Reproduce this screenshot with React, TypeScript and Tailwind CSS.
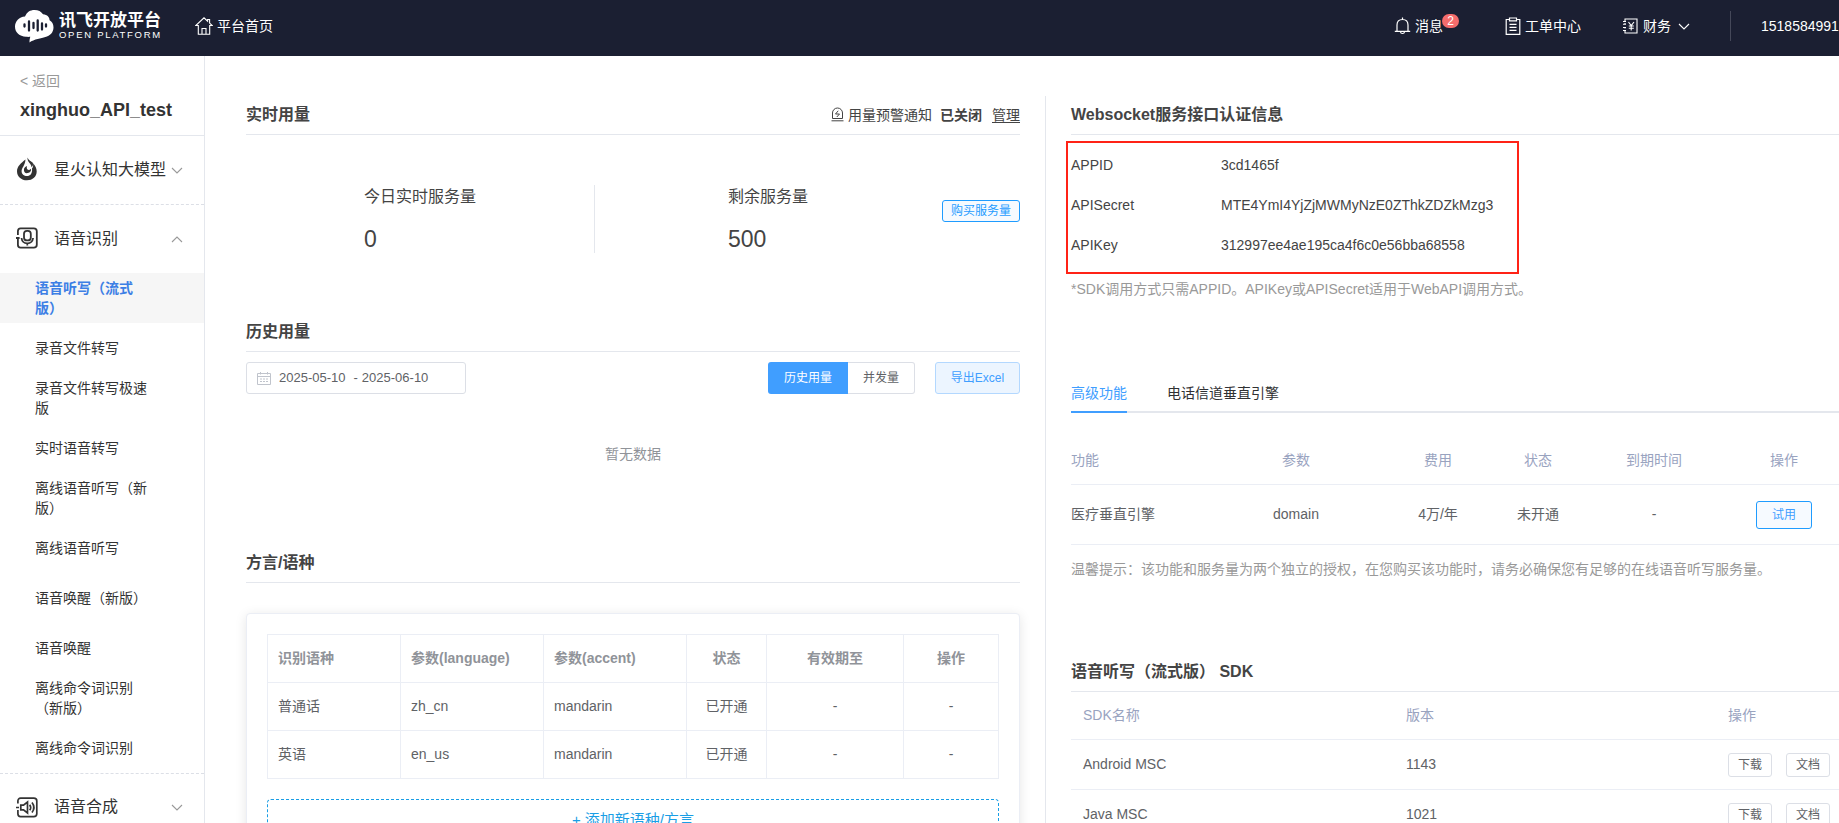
import type { ReactNode } from "react";
import { clsx } from "clsx";

const LANGUAGES = [
  { name: "普通话", language: "zh_cn", accent: "mandarin" },
  { name: "英语", language: "en_us", accent: "mandarin" },
];

const CREDENTIALS = [
  { label: "APPID", value: "3cd1465f" },
  { label: "APISecret", value: "MTE4YmI4YjZjMWMyNzE0ZThkZDZkMzg3" },
  { label: "APIKey", value: "312997ee4ae195ca4f6c0e56bba68558" },
];

const SDKS = [
  { name: "Android MSC", version: "1143" },
  { name: "Java MSC", version: "1021" },
];

const SPEECH_ITEMS = [
  { label: "录音文件转写", gap: "mt-[15px]" },
  { label: "录音文件转写极速版", gap: "mt-5" },
  { label: "实时语音转写", gap: "mt-5" },
  { label: "离线语音听写（新版）", gap: "mt-5" },
  { label: "离线语音听写", gap: "mt-5" },
  { label: "语音唤醒（新版）", gap: "mt-[30px]" },
  { label: "语音唤醒", gap: "mt-[30px]" },
  { label: "离线命令词识别（新版）", gap: "mt-5" },
  { label: "离线命令词识别", gap: "mt-5" },
];

function Chevron({ up, className }: { up?: boolean; className?: string }) {
  return (
    <svg width="12" height="7" viewBox="0 0 12 7" fill="none" className={className}>
      <path d={up ? "M1 6 6 1l5 5" : "M1 1l5 5 5-5"} stroke="currentColor" strokeWidth="1.1" />
    </svg>
  );
}

function Logo() {
  return (
    <div className="flex items-center gap-[5px] text-white">
      <svg width="39" height="33" viewBox="0 0 39 33">
        <path
          d="M10 6.5C12 2 15 0 19.500 0c4 0 6.600 1.500 8.500 4.300C32.500 4.500 34.500 7.500 34.600 10.200 37 11.500 38.500 14 38.500 17.200c0 5.300-3.500 8.700-8.200 9.800C26.500 28.500 19 29 14.500 32.500c0-2.500.3-4 .8-5.700-1.300.2-2.800.2-4.300 0C4.500 26.500 0 22.500 0 16.800 0 11.500 4 6.800 10 6.500Z"
          fill="#fff"
        />
        <path
          d="M9.500 14.500v2M14 11.500v9M18.500 13v5M22.700 10.500v10M27 13.500v6M31 14.500v2"
          stroke="#1b1f32"
          strokeWidth="2.3"
          strokeLinecap="round"
        />
      </svg>
      <div className="flex flex-col">
        <span className="h-[17px] text-[17px] font-bold leading-[17px] whitespace-nowrap">讯飞开放平台</span>
        <span className="mt-px text-[9.5px] leading-[10px] tracking-[1.72px] whitespace-nowrap">OPEN PLATFORM</span>
      </div>
    </div>
  );
}

function Header() {
  return (
    <header className="flex h-14 shrink-0 items-center bg-[#1b1f32] pl-[15px] text-sm text-white">
      <div className="-mt-1 w-[180px]">
        <Logo />
      </div>
      <div className="-mt-1 flex items-center">
        <svg width="18" height="18" viewBox="0 0 18 18" fill="none" stroke="#fff" strokeWidth="1.1">
          <path d="M3.300 8.500H.8L9 .8l3.600 3.400V2.500h2v3.600l2.600 2.400h-2.500v8.700H3.300Z" />
          <path d="M7 17v-5.500h4V17" />
        </svg>
        <span className="ml-1">平台首页</span>
      </div>
      <div className="-mt-1 ml-auto flex items-center">
        <svg width="17" height="18" viewBox="0 0 17 18" fill="none" stroke="#fff" strokeWidth="1.2">
          <path d="M3 14V8c0-3.500 2.200-5.500 5.500-5.500S14 4.500 14 8v6M.8 14.400h15.400M8.500 2.500V.5M6.500 15c.3 2 3.700 2 4 0" />
        </svg>
        <div className="relative ml-1">
          消息
          <span className="absolute top-[-2px] left-[27px] flex h-3.5 w-[17px] items-center justify-center rounded-full bg-[#f56c6c] text-xs leading-[14px]">
            2
          </span>
        </div>
        <svg className="ml-[62px]" width="16" height="18" viewBox="0 0 16 18" fill="none" stroke="#fff" strokeWidth="1.2">
          <path d="M4.500 2.500H1.200v14.800h13.600V2.500h-3.300M4.500 1h7v2.800h-7ZM4.500 7.300h7M4.500 10.300h7M4.500 13.300h7" />
        </svg>
        <span className="ml-1">工单中心</span>
        <svg className="ml-[41px]" width="16" height="16" viewBox="0 0 16 16" fill="none" stroke="#fff" strokeWidth="1.1">
          <path d="M3 3V1h12v14H3v-2M3 5v1.500M3 9v1.500M1 3.500h3M1 6.200h3M1 9.500h3M1 12.500h3" />
          <path d="M6.500 4l2.700 3.500L12 4M9.200 7.500V12.500M6.800 8h5M6.800 10.200h5" />
        </svg>
        <span className="ml-[5px]">财务</span>
        <Chevron className="ml-[7px]" />
        <div className="mr-[30px] ml-10 h-[30px] w-px bg-[#454859]" />
        <span className="w-[78px] overflow-hidden">1518584991</span>
      </div>
    </header>
  );
}

function MenuGroup({ icon, label, open }: { icon: ReactNode; label: string; open?: boolean }) {
  return (
    <div className="flex h-[68px] shrink-0 items-center pl-4 text-base text-[#333]">
      {icon}
      <span className="ml-4 w-[117px] whitespace-nowrap">{label}</span>
      <Chevron up={open} className="text-[#999]" />
    </div>
  );
}

function FlameIcon() {
  return (
    <svg width="22" height="24" viewBox="0 0 22 24" fill="none" className="-mt-0.5">
      <path
        d="M9.500 2.500C5 6 1 9.500 1 14.200 1 19.500 5.300 23.300 11 23.300s9.700-3.800 9.700-8.800c0-3-1.200-5.800-3.700-8.300.4 2.300.2 4-1 5.300.6 5-1.800 7.600-5 7.600-3 0-5.400-1.800-5.400-4.800C5.600 10.500 9 9 9.500 2.500Z"
        fill="#333"
      />
      <path
        d="M11.500.5c-.5 5 4 5.500 4 9.800 1.500-1.300 1.800-3 1.300-4.600C14.500 4 12.500 3 11.500.5ZM8 12c-.5 3 1 4.500 3.800 4.100 2.500-.4 3.600-2.300 3.200-4.300-1.200 1.200-2.500 1.500-3.400.8-.9-.8-1-2.200-.6-3.600-1.500.6-2.700 1.500-3 3Z"
        fill="#333"
      />
    </svg>
  );
}

function MicIcon() {
  return (
    <svg width="22" height="22" viewBox="0 0 22 22" fill="none" stroke="#333" strokeWidth="1.8" className="-mt-0.5">
      <path d="M1.900 8V4.200C1.900 2.400 2.900 1.300 4.600 1.300h13.200c1.700 0 3 1.100 3 2.900v13.600c0 1.700-1.300 2.900-3 2.900H4.600c-1.700 0-2.700-1.200-2.700-2.900V11M0 11h3.600" />
      <rect x="8" y="3.8" width="6.8" height="9.6" rx="3" />
      <path d="M5.500 11c.5 3.700 2.700 5.300 5.800 5.300s5.300-1.600 5.800-5.300M11.300 16.300V18.500" />
    </svg>
  );
}

function SpeakerIcon() {
  return (
    <svg width="22" height="21" viewBox="0 0 22 21" fill="none" stroke="#333" strokeWidth="1.7">
      <path d="M1.900 6.500V4C1.900 2.300 2.900 1.200 4.600 1.200h13.200c1.700 0 3 1.100 3 2.800v12.800c0 1.700-1.300 2.800-3 2.800H4.600c-1.700 0-2.700-1.100-2.700-2.800V13M0 10.500h3" />
      <path d="M4.800 8.200h2.700l4-3.200v11l-4-3.200H4.800ZM13.700 7.700c1.200 1.700 1.200 3.900 0 5.600M16 5.500c2.300 3 2.300 7 0 10" />
    </svg>
  );
}

function Sidebar() {
  return (
    <aside className="flex w-[205px] shrink-0 flex-col overflow-hidden border-r border-[#e4e7ed] bg-white">
      <div className="h-20 shrink-0 border-b border-[#e4e7ed] pt-[15px] pl-5">
        <div className="text-sm leading-5 text-[#999]">&lt; 返回</div>
        <div className="mt-[7px] text-lg leading-6 font-bold text-[#333]">xinghuo_API_test</div>
      </div>
      <MenuGroup icon={<FlameIcon />} label="星火认知大模型" />
      <div className="shrink-0 border-t border-dashed border-[#dcdfe6]" />
      <MenuGroup icon={<MicIcon />} label="语音识别" open />
      <div className="h-[500px] shrink-0 text-sm leading-5 text-[#333]">
        <div className="h-[50px] bg-[#f6f6f6] pt-[5px] pl-[35px] font-bold text-[#3d7fe5]">
          <div className="w-[115px]">语音听写（流式版）</div>
        </div>
        <ul className="w-[150px] pl-[35px]">
          {SPEECH_ITEMS.map((item) => (
            <li key={item.label} className={item.gap}>
              {item.label}
            </li>
          ))}
        </ul>
      </div>
      <div className="shrink-0 border-t border-dashed border-[#dcdfe6]" />
      <div className="-mt-px shrink-0">
        <MenuGroup icon={<SpeakerIcon />} label="语音合成" />
      </div>
    </aside>
  );
}

function SectionTitle({ children, extra }: { children: ReactNode; extra?: ReactNode }) {
  return (
    <div className="flex h-[39px] items-center justify-between border-b border-[#e4e7ed]">
      <h2 className="text-base leading-6 font-bold whitespace-pre text-[#444]">{children}</h2>
      {extra}
    </div>
  );
}

function UsageAlert() {
  return (
    <div className="flex items-center text-sm text-[#444]">
      <svg width="13" height="15" viewBox="0 0 13 15" fill="none" stroke="#444" className="-mt-0.5">
        <path d="M1.500 11.500V6a5 5 0 0 1 10 0v5.500ZM.5 13.800h12" />
        <path d="M7.200 3.800 4.500 7h4L5.800 10" />
      </svg>
      <span className="ml-1">用量预警通知</span>
      <span className="ml-2 font-bold">已关闭</span>
      <a className="ml-2.5 underline underline-offset-2">管理</a>
    </div>
  );
}

function HistoryToolbar() {
  return (
    <div className="mt-2.5 flex h-8 text-xs">
      <div className="flex w-[220px] items-center rounded-[3px] border border-[#dcdfe6] pl-2.5 text-[13px] text-[#606266]">
        <svg width="14" height="13" viewBox="0 0 14 13" fill="none" stroke="#c0c4cc">
          <path d="M.5 1.500h13v11H.5ZM.5 4.500h13M3.500 0v2.500M10.500 0v2.500" />
          <path d="M3 7h8M3 9.500h8" strokeDasharray="2 1" />
        </svg>
        <span className="ml-2">2025-05-10</span>
        <span className="ml-2">-</span>
        <span className="ml-1">2025-06-10</span>
      </div>
      <button className="ml-auto w-20 rounded-l-[3px] bg-[#409eff] text-white">历史用量</button>
      <button className="w-[67px] rounded-r-[3px] border border-l-0 border-[#dcdfe6] text-[#606266]">并发量</button>
      <button className="ml-5 w-[85px] rounded-[3px] border border-[#b3d8ff] bg-[#ecf5ff] text-[#409eff]">导出Excel</button>
    </div>
  );
}

const LANG_GRID = "grid grid-cols-[133px_143px_143px_80px_137px_95px] leading-[47px]";
const LANG_CELL = "h-12 border-r border-b border-[#ebeef5]";

function LanguageCard() {
  return (
    <div className="mt-[30px] h-[260px] rounded border border-[#ebeef5] bg-white px-5 pt-5 shadow-[0_2px_12px_rgba(0,0,0,0.1)]">
      <div className="border-t border-l border-[#ebeef5] text-sm text-[#606266]">
        <div className={clsx(LANG_GRID, "font-bold text-[#909399]")}>
          <div className={clsx(LANG_CELL, "pl-2.5")}>识别语种</div>
          <div className={clsx(LANG_CELL, "pl-2.5")}>参数(language)</div>
          <div className={clsx(LANG_CELL, "pl-2.5")}>参数(accent)</div>
          <div className={clsx(LANG_CELL, "text-center")}>状态</div>
          <div className={clsx(LANG_CELL, "text-center")}>有效期至</div>
          <div className={clsx(LANG_CELL, "text-center")}>操作</div>
        </div>
        {LANGUAGES.map((row) => (
          <div key={row.language} className={LANG_GRID}>
            <div className={clsx(LANG_CELL, "pl-2.5")}>{row.name}</div>
            <div className={clsx(LANG_CELL, "pl-2.5")}>{row.language}</div>
            <div className={clsx(LANG_CELL, "pl-2.5")}>{row.accent}</div>
            <div className={clsx(LANG_CELL, "text-center")}>已开通</div>
            <div className={clsx(LANG_CELL, "text-center")}>-</div>
            <div className={clsx(LANG_CELL, "text-center")}>-</div>
          </div>
        ))}
      </div>
      <button className="mt-5 h-[42px] w-full rounded border border-dashed border-[#1a9ee5] text-[15px] text-[#1a9ee5]">
        + 添加新语种/方言
      </button>
    </div>
  );
}

function UsageColumn() {
  return (
    <section className="w-[774px] shrink-0">
      <SectionTitle extra={<UsageAlert />}>实时用量</SectionTitle>
      <div className="flex h-[178px] pt-[50px] text-base text-[#444]">
        <div className="h-[68px] w-[349px] border-r border-[#e4e7ed] pl-[118px]">
          <div className="leading-6">今日实时服务量</div>
          <div className="mt-3.5 text-[23px] leading-8">0</div>
        </div>
        <div className="w-[347px] pl-[133px]">
          <div className="leading-6">剩余服务量</div>
          <div className="mt-3.5 text-[23px] leading-8">500</div>
        </div>
        <button className="mt-[15px] h-[22px] w-[78px] rounded-[3px] border border-[#1f9cff] bg-[#f6faff] text-xs text-[#1f9cff]">
          购买服务量
        </button>
      </div>
      <SectionTitle>历史用量</SectionTitle>
      <HistoryToolbar />
      <div className="h-[150px] pt-[50px] text-center text-sm leading-5 text-[#909399]">暂无数据</div>
      <SectionTitle>方言/语种</SectionTitle>
      <LanguageCard />
    </section>
  );
}

const FEATURE_GRID = "grid grid-cols-[142px_166px_118px_82px_150px_110px] items-center border-b border-[#ebeef5] text-center";

function FeatureTable() {
  return (
    <div className="text-sm text-[#606266]">
      <div className={clsx(FEATURE_GRID, "mt-6 h-12 pb-0.5 text-[#99a3bf]")}>
        <span className="text-left">功能</span>
        <span>参数</span>
        <span>费用</span>
        <span>状态</span>
        <span>到期时间</span>
        <span>操作</span>
      </div>
      <div className={clsx(FEATURE_GRID, "h-[60px]")}>
        <span className="pb-0.5 text-left">医疗垂直引擎</span>
        <span className="pb-0.5">domain</span>
        <span className="pb-0.5">4万/年</span>
        <span className="pb-0.5">未开通</span>
        <span className="pb-0.5">-</span>
        <button className="mx-auto h-7 w-14 rounded-[3px] border border-[#1f9cff] bg-[#f6faff] text-xs text-[#409eff]">试用</button>
      </div>
    </div>
  );
}

const SDK_GRID = "grid grid-cols-[323px_322px_1fr] items-center border-b border-[#ebeef5] pl-3";

function SdkTable() {
  return (
    <div className="text-sm text-[#606266]">
      <div className={clsx(SDK_GRID, "h-12 pb-0.5 text-[#99a3bf]")}>
        <span>SDK名称</span>
        <span>版本</span>
        <span>操作</span>
      </div>
      {SDKS.map((sdk) => (
        <div key={sdk.name} className={clsx(SDK_GRID, "h-[50px]")}>
          <span className="pb-0.5">{sdk.name}</span>
          <span className="pb-0.5">{sdk.version}</span>
          <span className="flex gap-3.5 text-xs">
            <button className="h-6 w-11 rounded-[3px] border border-[#dcdfe6]">下载</button>
            <button className="h-6 w-11 rounded-[3px] border border-[#dcdfe6]">文档</button>
          </span>
        </div>
      ))}
    </div>
  );
}

function ServiceColumn() {
  return (
    <section className="ml-[25px] min-w-0 flex-1 border-l border-[#e4e7ed] pl-[25px]">
      <SectionTitle>Websocket服务接口认证信息</SectionTitle>
      <div className="mt-1.5 -ml-[5px] h-[133px] w-[453px] border-2 border-[#ff2316] pt-[2px] pl-[3px] text-sm text-[#444]">
        {CREDENTIALS.map((item) => (
          <div key={item.label} className="flex h-10 items-center">
            <span className="w-[150px]">{item.label}</span>
            <span>{item.value}</span>
          </div>
        ))}
      </div>
      <p className="mt-[5px] text-sm leading-5 whitespace-nowrap text-[#999]">
        *SDK调用方式只需APPID。APIKey或APISecret适用于WebAPI调用方式。
      </p>
      <div className="mt-[75px] flex h-[39px] gap-10 border-b-2 border-[#e4e7ed] text-sm leading-[38px] text-[#303133]">
        <span className="h-[39px] border-b-2 border-[#409eff] text-[#409eff]">高级功能</span>
        <span>电话信道垂直引擎</span>
      </div>
      <FeatureTable />
      <p className="mt-3.5 text-sm leading-5 whitespace-nowrap text-[#999]">
        温馨提示：该功能和服务量为两个独立的授权，在您购买该功能时，请务必确保您有足够的在线语音听写服务量。
      </p>
      <div className="mt-[74px]">
        <SectionTitle>语音听写（流式版） SDK</SectionTitle>
      </div>
      <SdkTable />
    </section>
  );
}

export default function App() {
  return (
    <div className="flex h-[823px] w-[1839px] flex-col overflow-hidden bg-white font-['Liberation_Sans','Noto_Sans_CJK_SC',sans-serif]">
      <Header />
      <div className="flex min-h-0 flex-1">
        <Sidebar />
        <main className="flex min-w-0 flex-1 pt-10 pl-[41px]">
          <UsageColumn />
          <ServiceColumn />
        </main>
      </div>
    </div>
  );
}
